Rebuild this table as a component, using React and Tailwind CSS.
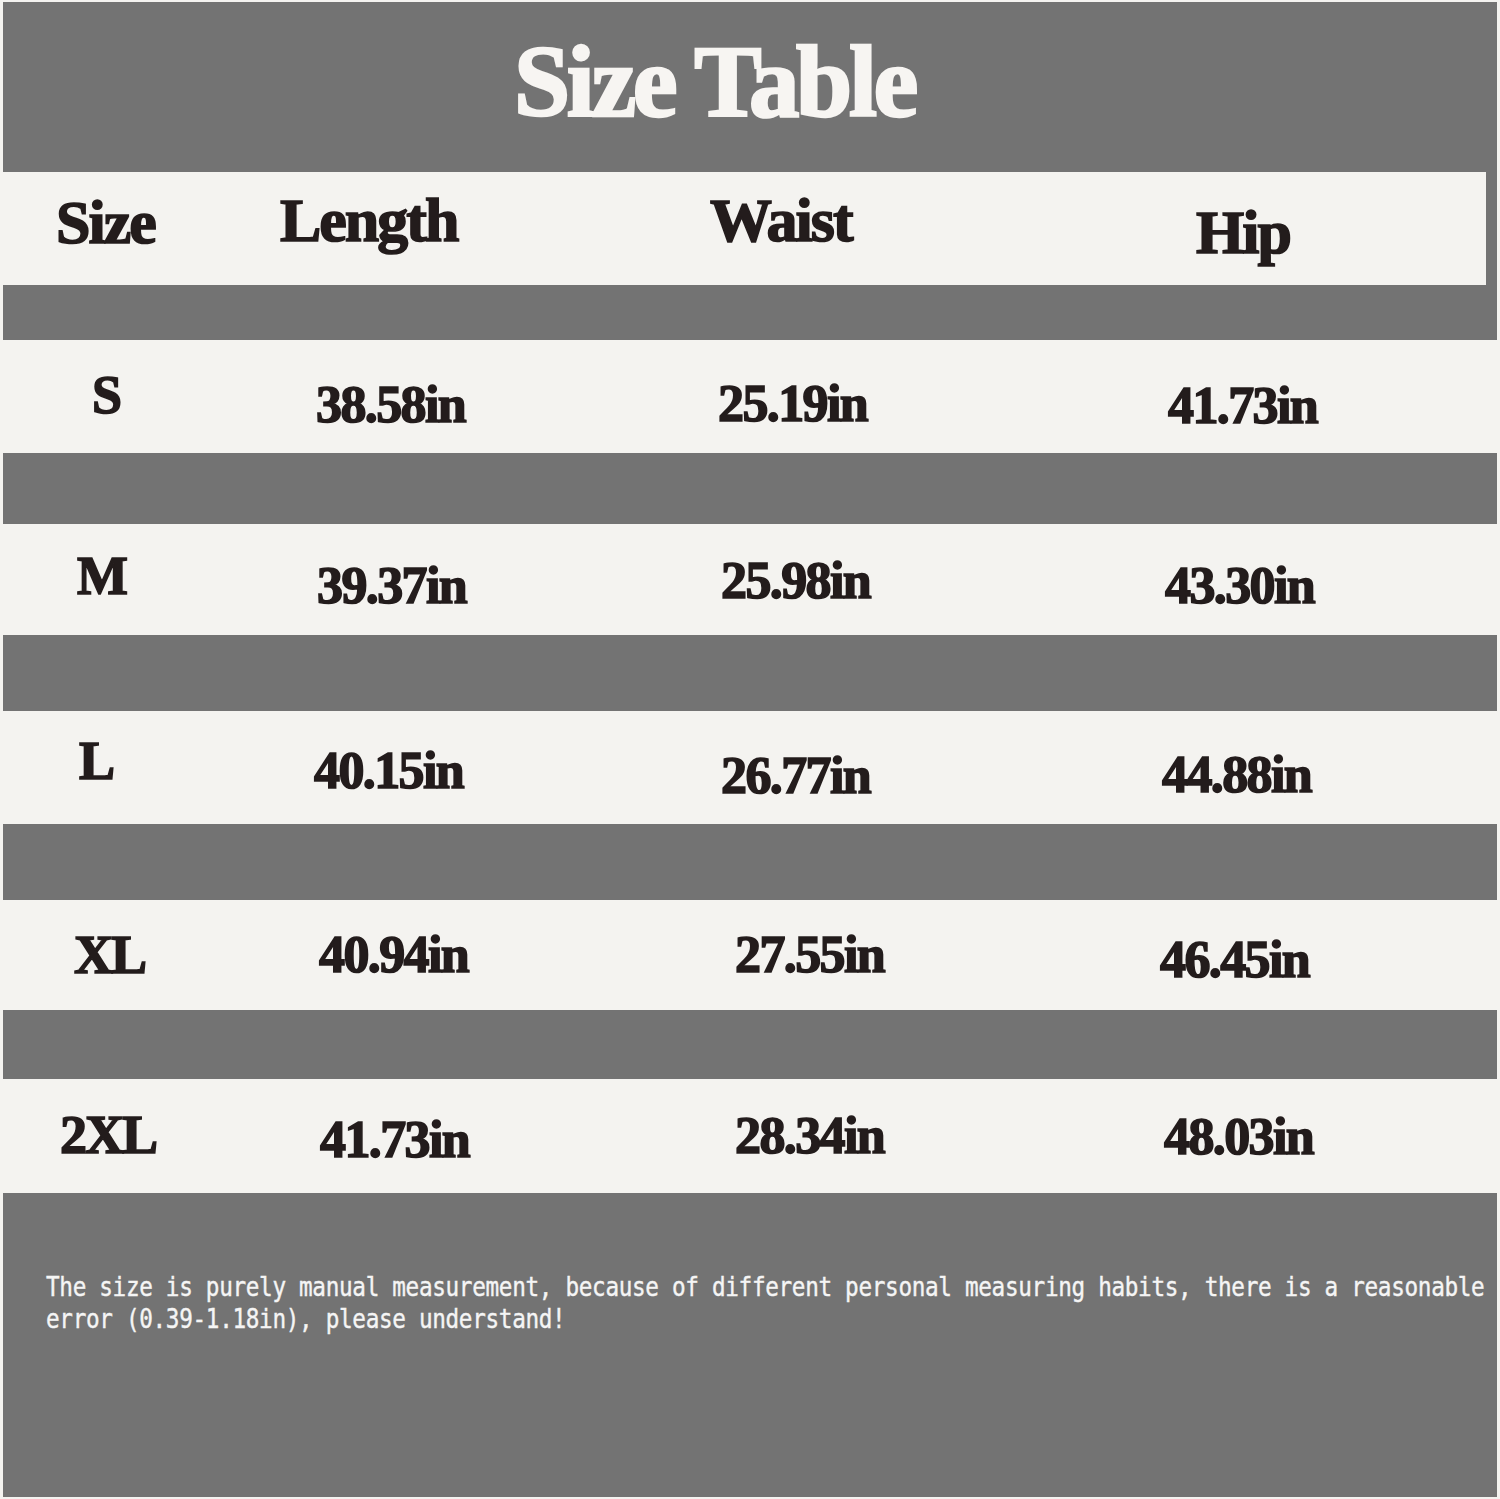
const serif = "font-['Liberation_Serif',serif] font-bold text-[#231c1c] leading-none whitespace-nowrap [-webkit-text-stroke:1.6px_#231c1c]";

// column boxes: x 3-250, 250-650, 650-1100, 1100-end
const COLS = ['w-[247px] shrink-0', 'w-[400px] shrink-0', 'w-[450px] shrink-0', 'flex-1'];

const rows = [
  {
    h: 'h-[113px] w-[1483px]',
    gap: 'h-[55px]',
    size: 'text-[62px] tracking-[-2px]',
    cells: [
      { t: 'Size', c: 'pl-[53px] pt-[19px]' },
      { t: 'Length', c: 'pl-[30px] pt-[17px]' },
      { t: 'Waist', c: 'pl-[60px] pt-[17px]' },
      { t: 'Hip', c: 'pl-[96px] pt-[29px]' },
    ],
  },
  {
    h: 'h-[113px]',
    gap: 'h-[71px]',
    cells: [
      { t: 'S', c: 'pl-[89px] pt-[28px]' },
      { t: '38.58in', c: 'pl-[66px] pt-[39px]' },
      { t: '25.19in', c: 'pl-[68px] pt-[38px]' },
      { t: '41.73in', c: 'pl-[68px] pt-[40px]' },
    ],
  },
  {
    h: 'h-[111px]',
    gap: 'h-[76px]',
    cells: [
      { t: 'M', c: 'pl-[74px] pt-[25px]' },
      { t: '39.37in', c: 'pl-[67px] pt-[36px]' },
      { t: '25.98in', c: 'pl-[71px] pt-[31px]' },
      { t: '43.30in', c: 'pl-[65px] pt-[36px]' },
    ],
  },
  {
    h: 'h-[113px]',
    gap: 'h-[76px]',
    cells: [
      { t: 'L', c: 'pl-[76px] pt-[23px]' },
      { t: '40.15in', c: 'pl-[64px] pt-[34px]' },
      { t: '26.77in', c: 'pl-[71px] pt-[39px]' },
      { t: '44.88in', c: 'pl-[62px] pt-[38px]' },
    ],
  },
  {
    h: 'h-[110px]',
    gap: 'h-[69px]',
    cells: [
      { t: 'XL', c: 'pl-[71px] pt-[28px]' },
      { t: '40.94in', c: 'pl-[69px] pt-[29px]' },
      { t: '27.55in', c: 'pl-[85px] pt-[29px]' },
      { t: '46.45in', c: 'pl-[60px] pt-[34px]' },
    ],
  },
  {
    h: 'h-[114px]',
    gap: null,
    cells: [
      { t: '2XL', c: 'pl-[57px] pt-[29px]' },
      { t: '41.73in', c: 'pl-[70px] pt-[35px]' },
      { t: '28.34in', c: 'pl-[85px] pt-[31px]' },
      { t: '48.03in', c: 'pl-[64px] pt-[32px]' },
    ],
  },
];

function Row({ row, header }) {
  return (
    <div className={`flex items-start bg-[#f4f3f0] shrink-0 ${row.h}`}>
      {row.cells.map((cell, i) => {
        let size = 'text-[52px] tracking-[-1.6px]';
        if (header) size = row.size;
        else if (i === 0) size = 'text-[54px] tracking-[-2px]';
        return (
          <div key={i} className={COLS[i]}>
            <div className={`${serif} ${size} ${cell.c}`}>{cell.t}</div>
          </div>
        );
      })}
    </div>
  );
}

export default function App() {
  return (
    <div className="w-[1500px] h-[1499px] bg-[#f4f3f0] pt-[2px] pl-[3px] pr-[3px] pb-[2px]">
      <div className="h-full bg-[#737373] flex flex-col">
        <div className="h-[170px] shrink-0 pl-[511px] pt-[30px]">
          <h1 className="font-['Liberation_Serif',serif] font-bold text-[101px] tracking-[-3.4px] leading-none text-[#f7f5f2] whitespace-nowrap [-webkit-text-stroke:2.5px_#f7f5f2]">
            Size Table
          </h1>
        </div>

        {rows.map((row, i) => (
          <div key={i} className="contents">
            <Row row={row} header={i === 0} />
            {row.gap && <div className={`shrink-0 ${row.gap}`} />}
          </div>
        ))}

        {/* note under the table */}
        <div className="flex-1 pl-[43px] pt-[78px] overflow-hidden">
          <p className="font-['DejaVu_Sans_Mono',monospace] text-[27px] leading-[32px] text-[#f5f5f5] whitespace-nowrap tracking-[-0.4px] scale-x-[0.84] origin-left [-webkit-text-stroke:0.4px_#f5f5f5]">
            The size is purely manual measurement, because of different personal measuring habits, there is a reasonable
            <br />
            error (0.39-1.18in), please understand!
          </p>
        </div>
      </div>
    </div>
  );
}
